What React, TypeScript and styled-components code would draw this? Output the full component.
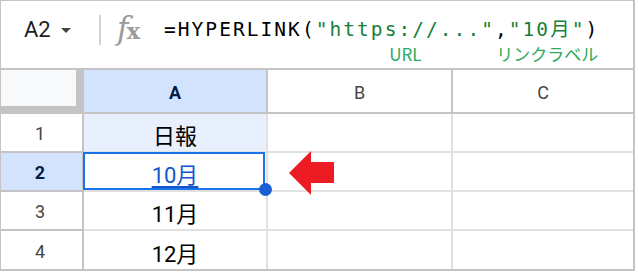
import React from "react";
import styled, { createGlobalStyle } from "styled-components";

const GlobalStyle = createGlobalStyle`
  html, body {
    margin: 0;
    padding: 0;
    background: #ffffff;
  }
  body {
    font-family: Roboto, "Noto Sans CJK JP", sans-serif;
  }
`;

const GRID = "#c4c4c4";
const CELL_LINE = "#e1e1e1";
const SELECT_BLUE = "#1a73e8";

const Frame = styled.div`
  width: 632px;
  height: 268px;
  border-top: 1px solid ${GRID};
  border-left: 1px solid ${GRID};
  border-right: 2px solid ${GRID};
  border-bottom: 2px solid ${GRID};
  display: flex;
  flex-direction: column;
  overflow: hidden;
`;

const FormulaBar = styled.div`
  box-sizing: border-box;
  height: 69px;
  flex-shrink: 0;
  border-bottom: 2px solid ${GRID};
  padding-bottom: 10px;
  display: flex;
  align-items: center;
`;

const NameBox = styled.div`
  box-sizing: border-box;
  width: 98px;
  padding-left: 23px;
  display: flex;
  align-items: center;
  gap: 10px;
  font-size: 22px;
  color: #1f1f1f;
`;

const Caret = styled.span`
  width: 0;
  height: 0;
  border-left: 5px solid transparent;
  border-right: 5px solid transparent;
  border-top: 5px solid #444746;
  margin-top: 1px;
`;

const Divider = styled.div`
  width: 2px;
  height: 30px;
  background: #d3d3d3;
`;

const FxIcon = styled.div`
  margin-left: 16px;
  width: 31px;
  display: flex;
  align-items: baseline;
  color: #9b9b9b;
  font-family: "DejaVu Serif", "Liberation Serif", serif;
  line-height: 30px;
  & .f {
    font-style: italic;
    font-size: 31px;
    letter-spacing: -2px;
  }
  & .x {
    font-weight: bold;
    font-size: 23px;
  }
`;

const Formula = styled.div`
  margin-left: 16px;
  font-family: "DejaVu Sans Mono", "Noto Sans CJK JP", monospace;
  font-size: 19.5px;
  letter-spacing: 2.05px;
  line-height: 24px;
  color: #000000;
  white-space: nowrap;
`;

const StringToken = styled.span`
  position: relative;
  color: #188038;
`;

const Annotation = styled.span`
  position: absolute;
  left: 50%;
  top: calc(100% + 3px);
  transform: translateX(-50%);
  font-family: "Noto Sans CJK JP", sans-serif;
  font-size: 17px;
  letter-spacing: 0;
  line-height: 20px;
  color: #2aaa5c;
  white-space: nowrap;
`;

const Sheet = styled.div`
  display: grid;
  grid-template-columns: 83px 184px 185px 180px;
  grid-template-rows: 44px 39px 39px 39px 38px;
`;

type CellProps = {
  $bg?: string;
  $line?: string;
  $lastCol?: boolean;
  $lastRow?: boolean;
};

const Cell = styled.div<CellProps>`
  position: relative;
  box-sizing: border-box;
  display: flex;
  align-items: center;
  justify-content: center;
  background: ${({ $bg }) => $bg || "#ffffff"};
  border-right: ${({ $lastCol, $line }) =>
    $lastCol ? "none" : `2px solid ${$line || CELL_LINE}`};
  border-bottom: ${({ $lastRow, $line }) =>
    $lastRow ? "none" : `2px solid ${$line || CELL_LINE}`};
`;

const Corner = styled.div`
  box-sizing: border-box;
  background: #f8f9fa;
  border-right: 8px solid ${GRID};
  border-bottom: 8px solid ${GRID};
`;

const ColHeader = styled(Cell)<{ $active?: boolean }>`
  font-size: 18px;
  padding-top: 2px;
  font-weight: ${({ $active }) => ($active ? 700 : 400)};
  color: ${({ $active }) => ($active ? "#041e49" : "#444746")};
`;

const RowHeader = styled(Cell)<{ $active?: boolean }>`
  font-size: 18px;
  padding-top: 2px;
  padding-right: 3px;
  font-weight: ${({ $active }) => ($active ? 700 : 400)};
  color: ${({ $active }) => ($active ? "#041e49" : "#444746")};
`;

const Value = styled.span`
  font-size: 22px;
  padding-top: 3px;
  color: #000000;
`;

const LinkValue = styled(Value)`
  color: #1155cc;
  text-decoration: underline;
  text-decoration-thickness: 2px;
  text-underline-offset: 3px;
`;

const Selection = styled.div`
  position: absolute;
  z-index: 2;
  top: -1px;
  left: -1px;
  right: 1px;
  bottom: 0;
  border: 2px solid ${SELECT_BLUE};
  pointer-events: none;
`;

const FillHandle = styled.div`
  position: absolute;
  right: -9px;
  bottom: -8px;
  width: 13px;
  height: 13px;
  border-radius: 50%;
  background: #1a5fd6;
`;

const PointerArrow = styled.svg`
  position: absolute;
  z-index: 3;
  left: 21px;
  top: -2px;
`;

const rows = [
  { n: "1", value: "日報" },
  { n: "2", value: "10月", link: true },
  { n: "3", value: "11月" },
  { n: "4", value: "12月" },
];

export default function App() {
  return (
    <>
      <GlobalStyle />
      <Frame>
        <FormulaBar>
          <NameBox>
            A2
            <Caret />
          </NameBox>
          <Divider />
          <FxIcon>
            <span className="f">f</span>
            <span className="x">x</span>
          </FxIcon>
          <Formula>
            =HYPERLINK(
            <StringToken>
              "https://..."
              <Annotation>URL</Annotation>
            </StringToken>
            ,
            <StringToken>
              "10月"
              <Annotation>リンクラベル</Annotation>
            </StringToken>
            )
          </Formula>
        </FormulaBar>
        <Sheet>
          <Corner />
          <ColHeader $line={GRID} $bg="#d3e3fd" $active>
            A
          </ColHeader>
          <ColHeader $line={GRID}>B</ColHeader>
          <ColHeader $line={GRID} $lastCol>
            C
          </ColHeader>
          {rows.map((r, i) => {
            const last = i === rows.length - 1;
            const active = r.n === "2";
            return (
              <React.Fragment key={r.n}>
                <RowHeader
                  $line={GRID}
                  $lastRow={last}
                  $active={active}
                  $bg={active ? "#d3e3fd" : undefined}
                >
                  {r.n}
                </RowHeader>
                <Cell $lastRow={last} $bg={r.n === "1" ? "#e8f0fe" : undefined}>
                  {r.link ? (
                    <LinkValue>{r.value}</LinkValue>
                  ) : (
                    <Value>{r.value}</Value>
                  )}
                  {active && (
                    <Selection>
                      <FillHandle />
                    </Selection>
                  )}
                </Cell>
                <Cell $lastRow={last}>
                  {active && (
                    <PointerArrow width="46" height="46" viewBox="0 0 46 46">
                      <polygon
                        points="0,22 22,0 22,11 45,11 45,32 22,32 22,44"
                        fill="#ed1c24"
                      />
                    </PointerArrow>
                  )}
                </Cell>
                <Cell $lastRow={last} $lastCol />
              </React.Fragment>
            );
          })}
        </Sheet>
      </Frame>
    </>
  );
}
